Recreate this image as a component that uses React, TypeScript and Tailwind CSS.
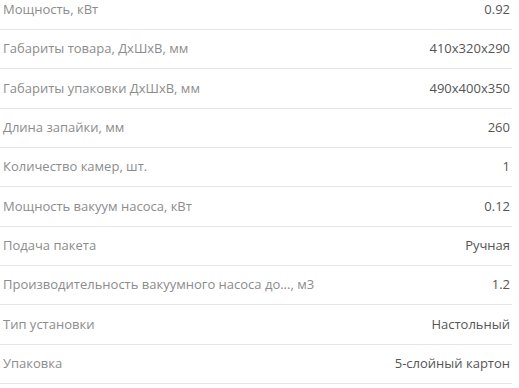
const specs: [string, string][] = [
  ['Мощность, кВт', '0.92'],
  ['Габариты товара, ДхШхВ, мм', '410x320x290'],
  ['Габариты упаковки ДхШхВ, мм', '490x400x350'],
  ['Длина запайки, мм', '260'],
  ['Количество камер, шт.', '1'],
  ['Мощность вакуум насоса, кВт', '0.12'],
  ['Подача пакета', 'Ручная'],
  ['Производительность вакуумного насоса до..., м3', '1.2'],
  ['Тип установки', 'Настольный'],
  ['Упаковка', '5-слойный картон'],
]

export default function App() {
  return (
    <div className="h-[388px] w-[519px] overflow-hidden bg-white font-['Open_Sans',sans-serif] text-[13px]">
      <div className="mt-[-9.5px] w-[512px]">
        {specs.map(([label, value]) => (
          <div
            key={label}
            className="flex h-[39.35px] items-center justify-between border-b border-[#e6e6e6] pl-[3px] pr-[2px]"
          >
            <span className="text-[#8c8c8c]">{label}</span>
            <span className="text-[#555]">{value}</span>
          </div>
        ))}
      </div>
    </div>
  )
}
